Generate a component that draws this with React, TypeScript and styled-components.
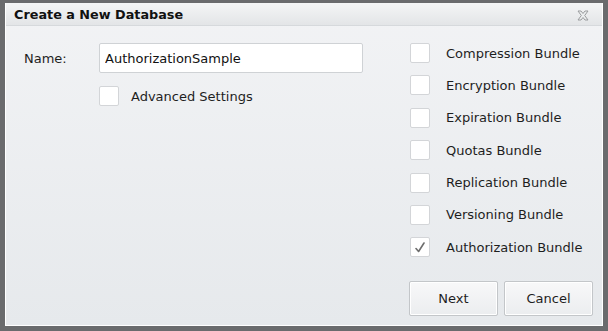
import React from "react";
import styled, { createGlobalStyle } from "styled-components";

const Global = createGlobalStyle`
  html, body { margin: 0; padding: 0; background: #6d6e70; }
  body { width: 608px; height: 331px; overflow: hidden; font-family: "DejaVu Sans", Verdana, sans-serif; }
`;

const Frame = styled.div`
  width: 608px;
  height: 331px;
  box-sizing: border-box;
  padding: 3px 5px 5px 5px;
  background: #6a6b6d;
`;

const Dialog = styled.div`
  width: 598px;
  height: 323px;
  box-sizing: border-box;
  display: flex;
  flex-direction: column;
  border-left: 1px solid #ffffff;
  border-bottom: 1px solid #ffffff;
  border-right: 1px solid #ffffff;
  background: linear-gradient(#f2f3f5, #e6e9ec);
`;

const TitleBar = styled.div`
  height: 22px;
  flex: none;
  display: flex;
  align-items: center;
  justify-content: space-between;
  padding: 0 13px 0 8px;
  background: linear-gradient(#f4f5f6, #e3e5e7);
  border-bottom: 1px solid #d6d9dc;
`;

const Title = styled.div`
  font-weight: bold;
  font-size: 12.8px;
  color: #111;
`;

const Body = styled.div`
  flex: 1;
  display: flex;
  justify-content: space-between;
  padding: 17px 9px 0 18px;
`;

const Left = styled.div`
  display: grid;
  grid-template-columns: 75px 264px;
  row-gap: 13px;
  align-items: center;
  align-content: start;
`;

const Label = styled.div`
  font-size: 13px;
  color: #1e1e1e;
`;

const Input = styled.input`
  box-sizing: border-box;
  width: 264px;
  height: 30px;
  border: 1px solid #cfd2d5;
  border-radius: 2px;
  background: #fff;
  padding: 0 5px;
  font-family: "DejaVu Sans", Verdana, sans-serif;
  font-size: 13px;
  color: #111;
  outline: none;
`;

const CheckRow = styled.label<{ $gap: number }>`
  display: flex;
  align-items: center;
  gap: ${(p) => p.$gap}px;
  font-size: 13px;
  color: #1e1e1e;
`;

const Box = styled.span`
  box-sizing: border-box;
  width: 20px;
  height: 20px;
  flex: none;
  border: 1px solid #d3d5d8;
  border-radius: 2px;
  background: #fff;
  display: flex;
  align-items: center;
  justify-content: center;
`;

const Check = styled.svg`
  width: 10px;
  height: 11px;
`;

const Right = styled.div`
  display: flex;
  flex-direction: column;
  width: 184px;
`;

const Bundles = styled.div`
  display: flex;
  flex-direction: column;
  gap: 12.4px;
  padding-left: 1px;
`;

const Buttons = styled.div`
  display: flex;
  gap: 6px;
  margin-top: 24px;
`;

const Button = styled.button`
  box-sizing: border-box;
  width: 89px;
  height: 35px;
  border: 1px solid #c3c6c9;
  border-radius: 2px;
  box-shadow: inset 0 0 0 1px #ffffff;
  background: linear-gradient(#f8f8f9, #ebedef);
  font-family: "DejaVu Sans", Verdana, sans-serif;
  font-size: 13px;
  color: #1e1e1e;
`;

const Close = styled.svg`
  width: 12px;
  height: 11px;
  margin-top: 2px;
`;

const bundles = [
  "Compression Bundle",
  "Encryption Bundle",
  "Expiration Bundle",
  "Quotas Bundle",
  "Replication Bundle",
  "Versioning Bundle",
  "Authorization Bundle",
];

export default function App() {
  return (
    <>
      <Global />
      <Frame>
        <Dialog>
          <TitleBar>
            <Title>Create a New Database</Title>
            <Close viewBox="0 0 12 11">
              <path
                d="M1 1 L4 1 L6 3.5 L8 1 L11 1 L7.7 5.5 L11 10 L8 10 L6 7.5 L4 10 L1 10 L4.3 5.5 Z"
                fill="#eceeef"
                stroke="#9a9c9e"
                strokeWidth="1"
              />
            </Close>
          </TitleBar>
          <Body>
            <Left>
              <Label>Name:</Label>
              <Input defaultValue="AuthorizationSample" readOnly />
              <span />
              <CheckRow $gap={12}>
                <Box />
                Advanced Settings
              </CheckRow>
            </Left>
            <Right>
              <Bundles>
                {bundles.map((b, i) => (
                  <CheckRow key={b} $gap={16}>
                    <Box>
                      {i === bundles.length - 1 ? (
                        <Check viewBox="0 0 10 11">
                          <path
                            d="M1 6.5 L3.6 9.5 L9 1"
                            fill="none"
                            stroke="#6e6e6e"
                            strokeWidth="1.6"
                            strokeLinecap="round"
                            strokeLinejoin="round"
                          />
                        </Check>
                      ) : null}
                    </Box>
                    {b}
                  </CheckRow>
                ))}
              </Bundles>
              <Buttons>
                <Button>Next</Button>
                <Button>Cancel</Button>
              </Buttons>
            </Right>
          </Body>
        </Dialog>
      </Frame>
    </>
  );
}
